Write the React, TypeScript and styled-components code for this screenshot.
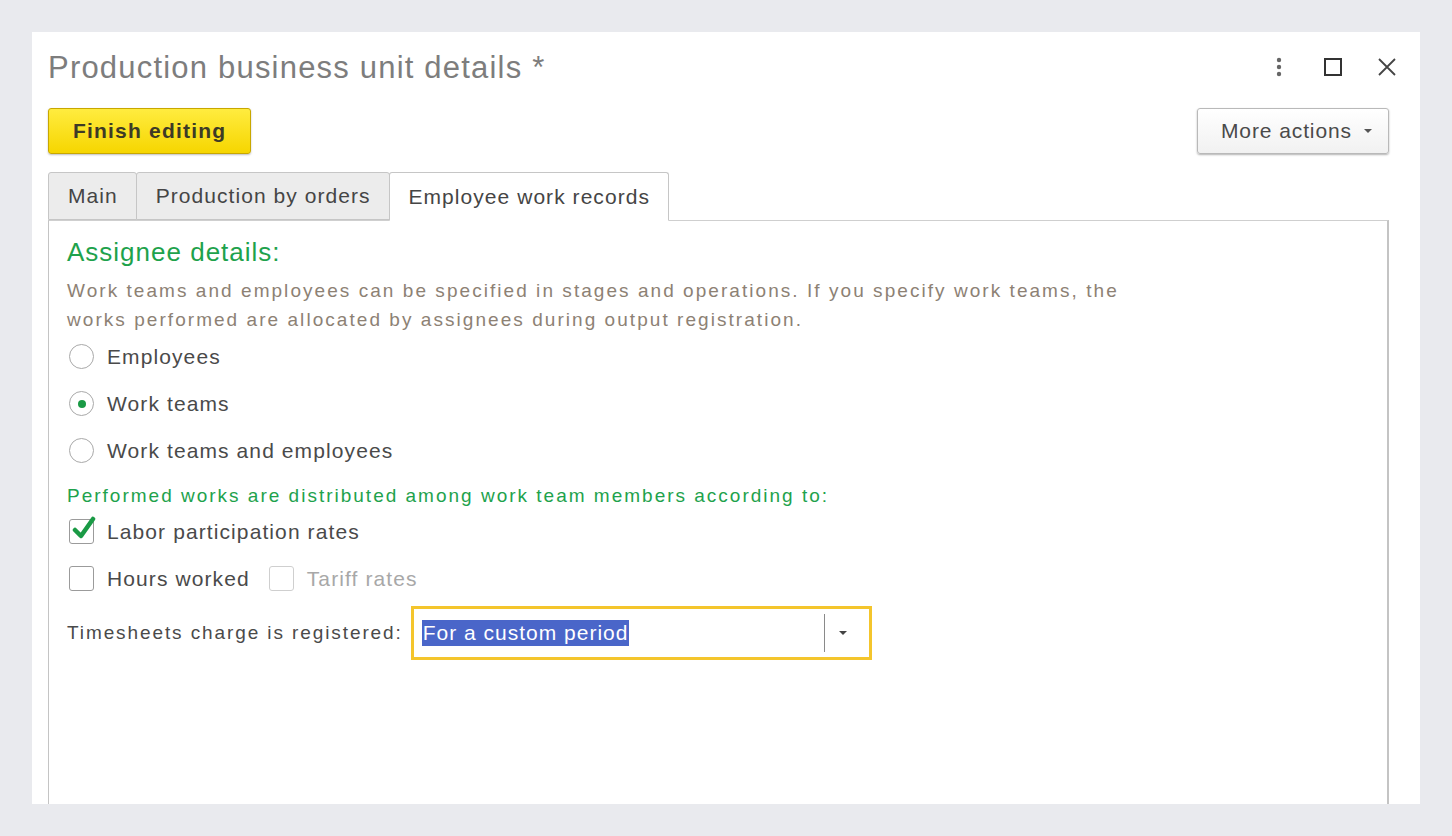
import React from "react";
import styled, { createGlobalStyle } from "styled-components";

const GlobalStyle = createGlobalStyle`
  html, body {
    margin: 0;
    padding: 0;
    background: #e9eaee;
    font-family: "Liberation Sans", Arial, sans-serif;
  }
`;

const Page = styled.div`
  width: 1452px;
  height: 836px;
  padding: 32px 0 0 32px;
  box-sizing: border-box;
  overflow: hidden;
`;

const Window = styled.div`
  width: 1388px;
  height: 772px;
  background: #ffffff;
  box-sizing: border-box;
  padding: 0 31px 0 16px;
  display: flex;
  flex-direction: column;
  overflow: hidden;
`;

const TitleBar = styled.div`
  height: 70px;
  display: flex;
  align-items: center;
  justify-content: space-between;
`;

const Title = styled.h1`
  margin: 0;
  font-weight: normal;
  font-size: 31px;
  color: #7d7d7d;
  letter-spacing: 1.2px;
  padding-top: 2px;
`;

const WindowControls = styled.div`
  display: flex;
  align-items: center;
  gap: 30px;
  margin-right: -10px;
`;

const IconButton = styled.span`
  width: 24px;
  height: 24px;
  display: flex;
  align-items: center;
  justify-content: center;
`;

const CommandBar = styled.div`
  display: flex;
  justify-content: space-between;
  align-items: center;
  margin-top: 6px;
  height: 46px;
`;

const PrimaryButton = styled.button`
  height: 46px;
  padding: 0 24px;
  font-family: inherit;
  font-size: 21px;
  font-weight: bold;
  color: #3d3a26;
  background: linear-gradient(#ffec3f, #f6d600);
  border: 1px solid #c8a700;
  border-radius: 3px;
  box-shadow: 0 1px 2px rgba(0, 0, 0, 0.25);
  letter-spacing: 1.2px;
`;

const SecondaryButton = styled.button`
  height: 46px;
  padding: 0 16px 0 23px;
  font-family: inherit;
  font-size: 21px;
  color: #4a4a4a;
  background: linear-gradient(#ffffff, #f1f1f1);
  border: 1px solid #b9b9b9;
  border-radius: 3px;
  box-shadow: 0 1px 2px rgba(0, 0, 0, 0.3);
  display: flex;
  align-items: center;
  gap: 12px;
  letter-spacing: 0.9px;
`;

const Caret = styled.span<{ $color?: string }>`
  width: 0;
  height: 0;
  border-left: 4px solid transparent;
  border-right: 4px solid transparent;
  border-top: 4px solid ${(p) => p.$color || "#555"};
`;

const TabStrip = styled.div`
  display: flex;
  margin-top: 18px;
  align-items: flex-end;
  height: 48px;
`;

const Tab = styled.div<{ $active?: boolean }>`
  height: ${(p) => (p.$active ? "49px" : "48px")};
  box-sizing: border-box;
  padding: 0 18px 0 19px;
  display: flex;
  align-items: center;
  font-size: 21px;
  color: #454545;
  background: ${(p) => (p.$active ? "#ffffff" : "#ececec")};
  border: 1px solid #c6c6c6;
  border-bottom: ${(p) => (p.$active ? "1px solid #ffffff" : "1px solid #c6c6c6")};
  border-radius: 3px 3px 0 0;
  margin-right: -1px;
  margin-bottom: ${(p) => (p.$active ? "-1px" : "0")};
  position: relative;
  z-index: ${(p) => (p.$active ? 1 : 0)};
  letter-spacing: 1.05px;
`;

const Panel = styled.div`
  flex: 1;
  border: 2px solid #c4c4c4;
  border-width: 1px 2px 0 1px;
  border-top-color: #cfcfcf;
  padding: 16px 18px 0 18px;
  display: flex;
  flex-direction: column;
`;

const SectionTitle = styled.div`
  font-size: 26px;
  color: #1ea24c;
  line-height: 30px;
  letter-spacing: 1px;
`;

const Hint = styled.div`
  margin-top: 9px;
  font-size: 19px;
  line-height: 29px;
  color: #8d8174;
  letter-spacing: 2.05px;
`;

const OptionRow = styled.label<{ $disabled?: boolean }>`
  display: inline-flex;
  align-items: center;
  gap: 13px;
  font-size: 21px;
  color: ${(p) => (p.$disabled ? "#a8a8a8" : "#4a4a4a")};
  letter-spacing: 1.1px;
  height: 47px;
  padding-left: 2px;
`;

const Radio = styled.span<{ $checked?: boolean }>`
  width: 25px;
  height: 25px;
  box-sizing: border-box;
  border-radius: 50%;
  border: 1.5px solid #a9a9a9;
  background: #fff;
  display: flex;
  align-items: center;
  justify-content: center;
  &::after {
    content: "";
    width: 8px;
    height: 8px;
    border-radius: 50%;
    background: ${(p) => (p.$checked ? "#1a9a45" : "transparent")};
  }
`;

const Checkbox = styled.span<{ $disabled?: boolean }>`
  width: 25px;
  height: 25px;
  box-sizing: border-box;
  border: 1.5px solid ${(p) => (p.$disabled ? "#cfcfcf" : "#9b9b9b")};
  border-radius: 3px;
  background: #fff;
  position: relative;
  flex-shrink: 0;
`;

const CheckMark = styled.svg`
  position: absolute;
  left: 2px;
  top: -5px;
`;

const RadioGroup = styled.div`
  display: flex;
  flex-direction: column;
  margin-top: -1px;
`;

const SubTitle = styled.div`
  font-size: 19px;
  color: #1ea24c;
  letter-spacing: 2px;
  margin-top: 11px;
  line-height: 22px;
`;

const CheckGroup = styled.div`
  display: flex;
  flex-direction: column;
  margin-top: 1px;
`;

const CheckLine = styled.div`
  display: flex;
  gap: 17px;
  align-items: center;
`;

const FieldRow = styled.div`
  display: flex;
  align-items: center;
  gap: 8px;
  margin-top: 4px;
`;

const FieldLabel = styled.span`
  font-size: 19px;
  color: #4a4a4a;
  letter-spacing: 1.9px;
`;

const SelectBox = styled.div`
  width: 461px;
  height: 54px;
  box-sizing: border-box;
  border: 3px solid #f4c52c;
  background: #fff;
  display: flex;
  align-items: center;
  padding: 0 8px;
`;

const SelectedText = styled.span`
  flex: 1;
  font-size: 21px;
  letter-spacing: 1px;
  span {
    background: #4a66c9;
    color: #fff;
    padding: 1px 1px 2px 1px;
  }
`;

const Divider = styled.span`
  width: 1px;
  height: 38px;
  background: #8a8a8a;
`;

const ArrowCell = styled.span`
  width: 36px;
  display: flex;
  justify-content: center;
`;

export default function App() {
  return (
    <>
      <GlobalStyle />
      <Page>
        <Window>
          <TitleBar>
            <Title>Production business unit details *</Title>
            <WindowControls>
              <IconButton>
                <svg width="6" height="20" viewBox="0 0 6 20">
                  <circle cx="3" cy="3" r="2.2" fill="#666" />
                  <circle cx="3" cy="10" r="2.2" fill="#666" />
                  <circle cx="3" cy="17" r="2.2" fill="#666" />
                </svg>
              </IconButton>
              <IconButton>
                <svg width="18" height="18" viewBox="0 0 18 18">
                  <rect x="1" y="1" width="16" height="16" fill="none" stroke="#333" strokeWidth="2" />
                </svg>
              </IconButton>
              <IconButton>
                <svg width="20" height="20" viewBox="0 0 20 20">
                  <path d="M2 2 L18 18 M18 2 L2 18" stroke="#444" strokeWidth="1.8" />
                </svg>
              </IconButton>
            </WindowControls>
          </TitleBar>

          <CommandBar>
            <PrimaryButton>Finish editing</PrimaryButton>
            <SecondaryButton>
              More actions <Caret />
            </SecondaryButton>
          </CommandBar>

          <TabStrip>
            <Tab>Main</Tab>
            <Tab>Production by orders</Tab>
            <Tab $active>Employee work records</Tab>
          </TabStrip>

          <Panel>
            <SectionTitle>Assignee details:</SectionTitle>
            <Hint>
              Work teams and employees can be specified in stages and operations. If you specify work teams, the
              <br />
              works performed are allocated by assignees during output registration.
            </Hint>
            <RadioGroup>
              <OptionRow>
                <Radio /> Employees
              </OptionRow>
              <OptionRow>
                <Radio $checked /> Work teams
              </OptionRow>
              <OptionRow>
                <Radio /> Work teams and employees
              </OptionRow>
            </RadioGroup>

            <SubTitle>Performed works are distributed among work team members according to:</SubTitle>
            <CheckGroup>
              <OptionRow>
                <Checkbox>
                  <CheckMark width="24" height="26" viewBox="0 0 24 26">
                    <path d="M3 15 L9 21 L21 4" fill="none" stroke="#1a9a45" strokeWidth="4.5" strokeLinecap="round" strokeLinejoin="round" />
                  </CheckMark>
                </Checkbox>
                Labor participation rates
              </OptionRow>
              <CheckLine>
                <OptionRow>
                  <Checkbox /> Hours worked
                </OptionRow>
                <OptionRow $disabled>
                  <Checkbox $disabled /> Tariff rates
                </OptionRow>
              </CheckLine>
            </CheckGroup>

            <FieldRow>
              <FieldLabel>Timesheets charge is registered:</FieldLabel>
              <SelectBox>
                <SelectedText>
                  <span>For a custom period</span>
                </SelectedText>
                <Divider />
                <ArrowCell>
                  <Caret $color="#444" />
                </ArrowCell>
              </SelectBox>
            </FieldRow>
          </Panel>
        </Window>
      </Page>
    </>
  );
}
